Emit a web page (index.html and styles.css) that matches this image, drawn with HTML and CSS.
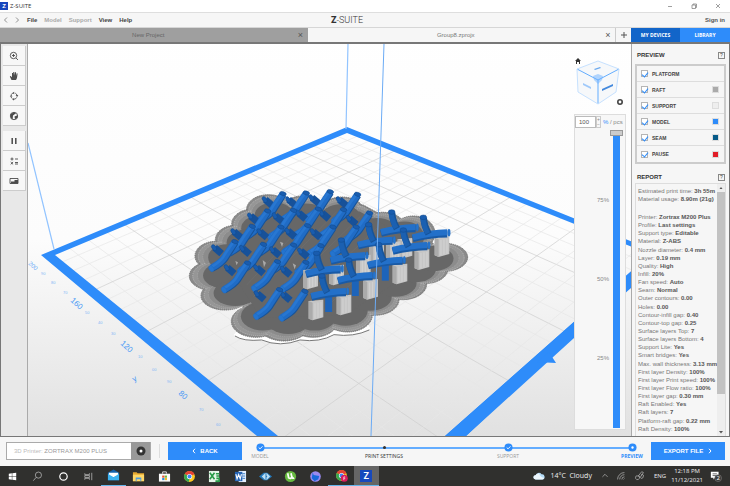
FILE: index.html
```html
<!DOCTYPE html>
<html lang="en">
<head>
<meta charset="utf-8">
<title>Z-SUITE</title>
<link rel="stylesheet" href="styles.css">
</head>
<body>
<header class="titlebar">
  <span class="app-badge">Z</span><span class="app-name">Z-SUITE</span>
  <div class="window-buttons">
    <button aria-label="Minimize"><svg viewBox="0 0 8 8"><path d="M2 4.500h4"/></svg></button>
    <button aria-label="Restore"><svg viewBox="0 0 8 8"><path d="M2 3h3.500v3.500h-3.500zM3 3V2h3.500v3.500h-1"/></svg></button>
    <button aria-label="Close"><svg viewBox="0 0 8 8"><path d="M2 2l4 4M6 2l-4 4"/></svg></button>
  </div>
</header>
<nav class="menubar">
  <div class="menu-items">
    <button class="nav-arrow" aria-label="Undo"><svg viewBox="0 0 5 8"><path d="M4 1.500L1.500 4 4 6.500"/></svg></button>
    <button class="nav-arrow" aria-label="Redo"><svg viewBox="0 0 5 8"><path d="M1 1.500L3.500 4 1 6.500"/></svg></button>
    <button>File</button><button class="dim">Model</button><button class="dim">Support</button><button>View</button><button>Help</button>
  </div>
  <div class="logo"><b>Z</b>-SUITE</div>
  <a class="signin" href="#">Sign in</a>
</nav>
<div class="tabs">
  <div class="tab inactive"><span>New Project</span><button aria-label="Close New Project">×</button></div>
  <div class="tab"><span>Group8.zprojx</span><button aria-label="Close Group8">×</button></div>
  <button class="add-tab" aria-label="New tab"><svg viewBox="0 0 8 8"><path d="M4 1v6M1 4h6"/></svg></button>
  <button class="devices">MY DEVICES</button>
  <button class="library">LIBRARY</button>
</div>
<main class="workspace">
  <aside class="tools">
    <button aria-label="Zoom"><svg viewBox="0 0 10 10"><circle cx="4.500" cy="4.500" r="3.200"/><path d="M7 7l2 2M3 4.500h3M4.500 3v3"/></svg></button>
    <button aria-label="Pan"><svg viewBox="0 0 10 10"><path class="fill" d="M2.500 9L.8 5.500l.8-.4L3 6.200V2h1v2.500L4.300 1h1l.2 3.400L6 1.200h1V5l.7-2.800.9.300L8 7 7 9z"/></svg></button>
    <button aria-label="Rotate"><svg viewBox="0 0 10 10"><path d="M2 5.500a3 3 0 001.500 2.200M5 8.200a3 3 0 002.700-1.800M8 4.500A3 3 0 006.300 2.200M4.800 1.900A3 3 0 002.200 3.700"/><path class="fill" d="M.8 5.500L2.200 3.700l1.300 1.800zM6.600 4.300l2.700-.2L8.200 6zM4.900 7l.1 2.400-1.700-1zM5.200.8v2.400L3.800 2z"/></svg></button>
    <button aria-label="View mode"><svg viewBox="0 0 10 10"><circle cx="5" cy="5" r="3.700"/><path class="fill" d="M1.300 3.200L5 1.300l2 1-3 2.200-.4 4L2 7zM5.500 5.500l3-1.200v2.500L6 8.300z"/></svg></button>
    <button class="group-start" aria-label="Pause"><svg viewBox="0 0 10 10"><path class="thick" d="M3.200 2v6M6.800 2v6"/></svg></button>
    <button aria-label="Adjust"><svg viewBox="0 0 10 10"><path d="M1.500 3h3M3 1.500v3M6 3h3M1.700 6l2.400 2.400M4.100 6L1.700 8.400M6 6.500h3M6 8h3"/></svg></button>
    <button aria-label="Dimensions"><svg viewBox="0 0 10 10"><path d="M1 2.500h8v5H1z"/><path class="fill" d="M2 5.500h3.500V4H9v3.500H2z"/></svg></button>
  </aside>
  <section class="viewport">
    <svg class="scene" viewBox="28 44 603 392" preserveAspectRatio="xMidYMid slice" role="img" aria-label="Build platform with sliced models">
      <defs>
        <linearGradient id="floor" x1="0" y1="0" x2="0" y2="1"><stop offset="0" stop-color="#fff"/><stop offset=".48" stop-color="#fcfcfc"/><stop offset="1" stop-color="#d8d8d8"/></linearGradient>
        <g id="stub"><path class="stub" d="M-6-7L15 11"/><ellipse class="cap" cx="-8" cy="-7" rx="6" ry="10" transform="rotate(-35 -8 -7)"/></g>
        <g id="elbow"><path class="pipe-dark" d="M-36 38Q-6 22 3 8T34-40"/><path class="pipe" d="M-37 36Q-8 19 1 5T32-42"/><path class="shine" d="M-36 32Q-8 14-1 1T29-42"/><ellipse class="cap" cx="33" cy="-43" rx="10" ry="6" transform="rotate(18 33 -43)"/><ellipse class="end" cx="-38" cy="38" rx="7" ry="10" transform="rotate(-30 -38 38)"/></g>
        <g id="short"><path class="bar-dark" d="M-52 12Q0-2 52-2"/><path class="bar" d="M-52 8Q0-6 52-7"/><path class="pipe-dark" d="M-4-2Q-18-28-19-50"/><path class="neck" d="M-7-4Q-20-28-21-50"/><ellipse class="cap" cx="-20" cy="-52" rx="10" ry="7"/><ellipse class="end" cx="57" cy="-6" rx="4" ry="11"/></g>
        <g id="tee"><path class="leg" d="M0 0v56"/><use href="#short"/></g>
        <g id="prop"><path fill="#c6c6c6" d="M-22-27L22-31V22L-10 31-22 26z"/><path fill="#ababab" d="M-22-27l12 5v53l-12-5z"/><path stroke="#dadada" fill="none" stroke-width="2" d="M-3-20V26M6-22V24M15-24V22"/></g>
        <g id="outline">
          <ellipse cx="265" cy="88" rx="65" ry="44"/><ellipse cx="215" cy="132" rx="60" ry="44"/><ellipse cx="166" cy="180" rx="60" ry="44"/><ellipse cx="108" cy="228" rx="63" ry="44"/><ellipse cx="95" cy="288" rx="67" ry="43"/><ellipse cx="135" cy="347" rx="72" ry="43"/><ellipse cx="228" cy="424" rx="74" ry="48"/><ellipse cx="312" cy="431" rx="78" ry="52"/><ellipse cx="400" cy="420" rx="75" ry="52"/><ellipse cx="503" cy="405" rx="74" ry="51"/><ellipse cx="583" cy="360" rx="74" ry="46"/><ellipse cx="668" cy="313" rx="72" ry="46"/><ellipse cx="734" cy="267" rx="70" ry="44"/><ellipse cx="794" cy="232" rx="69" ry="42"/><ellipse cx="700" cy="160" rx="65" ry="52"/><ellipse cx="610" cy="142" rx="65" ry="45"/><ellipse cx="486" cy="94" rx="66" ry="43"/><ellipse cx="370" cy="90" rx="66" ry="42"/>
          <path d="M100 240L240 65 550 75 760 190 690 300 500 420 220 430z"/>
        </g>
      </defs>
      <rect x="-100" y="0" width="900" height="500" fill="url(#floor)"/>
      <g id="grid"></g>
      <g class="frame">
        <path d="M41 255L347 127 660 253 640 272 466 436 445 436 638 265 632 247 347 133 55 255 278 436H257z"/>
        <path d="M445 436L574 322 632 271V287L574 338 466 436z"/><path d="M537 362L549 352 556 363z"/>
      </g>
      <path class="edge" d="M28 143L54 249M348 44L346 129"/>
      <g class="ruler">
        <text transform="translate(28 264) rotate(42)">200</text><text transform="translate(70 301) rotate(42)" class="big">160</text><text transform="translate(120 344) rotate(42)" class="big">120</text><text transform="translate(178 394) rotate(42)" class="big">80</text>
        <text transform="translate(134 382) rotate(-30)" class="big">y</text>
        <g class="small"><text x="41" y="275">90</text><text x="51" y="284">80</text><text x="63" y="294">70</text><text x="85" y="314">50</text><text x="98" y="324">40</text><text x="111" y="335">30</text><text x="138" y="358">10</text><text x="152" y="371">00</text><text x="167" y="383">90</text><text x="199" y="411">70</text><text x="216" y="426">60</text></g>
      </g>
      <g transform="translate(180 180) scale(.3333)">
        <path class="skirt-gap" d="M165 460Q190 480 245 474 300 496 360 474 420 482 462 458 520 466 568 440"/>
        <path class="skirt" d="M165 468Q190 485 245 480 300 503 360 480 420 488 462 464 520 472 568 450"/>
        <g class="rim"><use href="#outline"/></g>
        <g class="ring" transform="translate(11 7) scale(.975)"><use href="#outline"/></g>
        <g class="ring pale" transform="translate(26 16) scale(.94)"><use href="#outline"/></g>
        <g class="raft" transform="translate(44 27) scale(.9)"><use href="#outline"/></g>
        <path class="hatch" d="M170 290L350 95M200 315L405 95M220 350L470 95M245 400L540 110M310 410L590 145M410 410L640 190"/>
        <path d="M248 240l10 8-6 14zM300 185l10 4-4 12zM166 243l8 4-4 9zM338 250l10 6-4 12z" fill="#aaa"/>
        <use href="#stub" x="262" y="66"/><use href="#stub" x="332" y="66"/><use href="#stub" x="402" y="60"/><use href="#stub" x="484" y="66"/>
        <use href="#elbow" x="276" y="84"/><use href="#elbow" x="346" y="82"/><use href="#elbow" x="418" y="78"/><use href="#elbow" x="500" y="86"/>
        <use href="#stub" x="218" y="115"/><use href="#stub" x="292" y="114"/><use href="#stub" x="362" y="106"/><use href="#stub" x="432" y="106"/><use href="#stub" x="514" y="122"/>
        <use href="#elbow" x="230" y="136"/><use href="#elbow" x="308" y="134"/><use href="#elbow" x="382" y="130"/><use href="#elbow" x="458" y="132"/><use href="#elbow" x="536" y="142"/>
        <use href="#stub" x="168" y="162"/><use href="#stub" x="246" y="162"/><use href="#stub" x="330" y="160"/><use href="#stub" x="406" y="162"/>
        <use href="#elbow" x="184" y="182"/><use href="#elbow" x="270" y="184"/><use href="#elbow" x="350" y="180"/><use href="#elbow" x="426" y="184"/><use href="#elbow" x="496" y="184"/>
        <use href="#stub" x="110" y="210"/><use href="#stub" x="194" y="212"/><use href="#stub" x="284" y="216"/><use href="#stub" x="368" y="220"/>
        <use href="#elbow" x="132" y="228"/><use href="#elbow" x="218" y="236"/><use href="#elbow" x="308" y="238"/><use href="#elbow" x="390" y="240"/>
        <use href="#stub" x="148" y="270"/><use href="#stub" x="236" y="270"/><use href="#stub" x="316" y="274"/>
        <use href="#elbow" x="170" y="292"/><use href="#elbow" x="260" y="288"/><use href="#elbow" x="345" y="290"/>
        <use href="#stub" x="238" y="348"/><use href="#stub" x="316" y="350"/><use href="#elbow" x="266" y="372"/><use href="#elbow" x="342" y="377"/>
        <use href="#prop" x="786" y="200"/><use href="#prop" x="675" y="205"/><use href="#prop" x="590" y="215"/><use href="#short" x="655" y="148"/><use href="#short" x="750" y="164"/>
        <use href="#prop" x="726" y="239"/><use href="#prop" x="640" y="215"/><use href="#short" x="586" y="186"/><use href="#short" x="690" y="202"/>
        <use href="#prop" x="660" y="282"/><use href="#prop" x="550" y="255"/><use href="#prop" x="470" y="285"/><use href="#prop" x="392" y="297"/><use href="#short" x="504" y="232"/><use href="#tee" x="616" y="246"/>
        <use href="#prop" x="572" y="328"/><use href="#short" x="430" y="272"/><use href="#tee" x="526" y="292"/>
        <use href="#prop" x="408" y="390"/><use href="#prop" x="492" y="375"/><use href="#tee" x="446" y="340"/>
      </g>
      <path class="edge front" d="M384 44L371 436"/>
    </svg>
    <div class="orient">
      <svg viewBox="0 0 54 52" role="img" aria-label="Orientation cube"><path d="M2 6L5 3l3 3H7v3H6V7H4v2H3V6z" fill="#333"/><path d="M4 14l21-8 21 8-3 23-18 12L5 37z" fill="#f6f8fa"/><path d="M4 14l21 11 21-11M25 25v24" fill="none" stroke="#63adff"/><path d="M4 14l21-8 21 8-3 23-18 12L5 37z" fill="none" stroke="#c6e1ff"/><path d="M20 21l5-2 5 2-1 4-4 4-4-4z" fill="#6ab0ff" opacity=".5"/><path d="M21 14l6-2 1 1-6 2z" fill="#6aa8ee"/><path d="M10 28l8 4v2l-8-4z" fill="#9fc9fa"/><path d="M29 34l11-5v2l-11 5z" fill="#4389dd"/><circle cx="47" cy="47" r="2.200" fill="none" stroke="#444" stroke-width="1.600"/></svg>
    </div>
    <div class="layer-panel">
      <div class="layer-value"><input type="number" value="100" aria-label="Visible layers"><span class="spin"><i>+</i><i>−</i></span><span><em>%</em> / pcs</span></div>
      <div class="layer-body"><div class="marks"><span>75%</span><span>50%</span><span>25%</span></div><input class="layer-slider" type="range" min="0" max="100" value="100" aria-label="Layer position"></div>
    </div>
  </section>
  <aside class="side">
    <div class="side-head"><h2>PREVIEW</h2><button aria-label="Preview help">?</button></div>
    <div class="legend">
      <label><input type="checkbox" checked>PLATFORM</label>
      <label><input type="checkbox" checked>RAFT<i class="swatch raft-c"></i></label>
      <label><input type="checkbox" checked>SUPPORT<i class="swatch support-c"></i></label>
      <label><input type="checkbox" checked>MODEL<i class="swatch model-c"></i></label>
      <label><input type="checkbox" checked>SEAM<i class="swatch seam-c"></i></label>
      <label><input type="checkbox" checked>PAUSE<i class="swatch pause-c"></i></label>
    </div>
    <div class="side-head report-head"><h2>REPORT</h2><button aria-label="Report help">?</button></div>
    <div class="report">
      <div class="report-text">
        <p>Estimated print time: <b>3h 55m</b></p><p>Material usage: <b>8.90m (21g)</b></p>
        <div class="settings">
          <p>Printer: <b>Zortrax M200 Plus</b></p><p>Profile: <b>Last settings</b></p><p>Support type: <b>Editable</b></p><p>Material: <b>Z-ABS</b></p><p>Nozzle diameter: <b>0.4 mm</b></p><p>Layer: <b>0.19 mm</b></p><p>Quality: <b>High</b></p><p>Infill: <b>20%</b></p><p>Fan speed: <b>Auto</b></p><p>Seam: <b>Normal</b></p><p>Outer contours: <b>0.00</b></p><p>Holes: <b>0.00</b></p><p>Contour-infill gap: <b>0.40</b></p><p>Contour-top gap: <b>0.25</b></p><p>Surface layers Top: <b>7</b></p><p>Surface layers Bottom: <b>4</b></p><p>Support Lite: <b>Yes</b></p><p>Smart bridges: <b>Yes</b></p><p>Max. wall thickness: <b>3.13 mm</b></p><p>First layer Density: <b>100%</b></p><p>First layer Print speed: <b>100%</b></p><p>First layer Flow ratio: <b>100%</b></p><p>First layer gap: <b>0.30 mm</b></p><p>Raft Enabled: <b>Yes</b></p><p>Raft layers: <b>7</b></p><p>Platform-raft gap: <b>0.22 mm</b></p><p>Raft Density: <b>100%</b></p>
        </div>
      </div>
      <div class="scrollbar"><svg viewBox="0 0 8 8"><path d="M2.500 5L4 3l1.500 2z"/></svg><div class="thumb"></div><svg viewBox="0 0 8 8"><path d="M2 3h4L4 5.500z"/></svg></div>
    </div>
  </aside>
</main>
<footer class="actions">
  <div class="printer"><span>3D Printer: <b>ZORTRAX M200 PLUS</b></span><button aria-label="Printer settings"><svg viewBox="0 0 10 10"><circle cx="5" cy="5" r="4.500" fill="#333"/><circle cx="5" cy="5" r="1.500" fill="#fff"/></svg></button></div>
  <span class="divider"></span>
  <button class="primary"><svg viewBox="0 0 4 6"><path d="M3 .8L1 3l2 2.200"/></svg>BACK</button>
  <ol class="steps">
    <li><svg viewBox="0 0 10 10"><circle cx="5" cy="5" r="4.500" fill="#2e8cfa"/><path d="M3 5l1.500 1.500L7.200 3.700" stroke="#fff" fill="none"/></svg>MODEL</li>
    <li class="current"><svg viewBox="0 0 10 10"><circle cx="5" cy="5" r="1.700" fill="#333"/></svg>PRINT SETTINGS</li>
    <li><svg viewBox="0 0 10 10"><circle cx="5" cy="5" r="4.500" fill="#2e8cfa"/><path d="M3 5l1.500 1.500L7.200 3.700" stroke="#fff" fill="none"/></svg>SUPPORT</li>
    <li class="active"><svg viewBox="0 0 10 10"><circle cx="5" cy="5" r="4.500" fill="#2e8cfa"/><circle cx="5" cy="5" r="1.300" fill="#fff"/></svg>PREVIEW</li>
  </ol>
  <button class="primary export">EXPORT FILE<svg viewBox="0 0 4 6"><path d="M1 .8L3 3 1 5.200"/></svg></button>
</footer>
<footer class="taskbar">
  <div class="apps">
    <button aria-label="Start"><svg viewBox="0 0 14 14"><path fill="#fff" d="M3 4l3.300-.5v3.200H3zM6.800 3.400L11 3v3.700H6.800zM3 7.200h3.300v3.200L3 10zM6.800 7.200H11V11l-4.200-.5z"/></svg></button>
    <button aria-label="Search"><svg viewBox="0 0 14 14" class="line"><circle cx="8" cy="5.500" r="3.300"/><path d="M5.500 8L2.500 11.500"/></svg></button>
    <button aria-label="Cortana"><svg viewBox="0 0 14 14"><circle cx="7" cy="7" r="4" fill="none" stroke="#fff" stroke-width="1.300"/></svg></button>
    <button aria-label="Task view"><svg viewBox="0 0 14 14" class="line"><path d="M3 3.500V5h5V3.500M3 10.500V9h5v1.500M3 6h5v2H3zM10.500 3v8"/></svg></button>
    <button aria-label="Mail" class="running"><svg viewBox="0 0 14 14"><path fill="#1463ad" d="M1 4l6-3.500L13 4v8H1z"/><path fill="#fff" d="M2 4h10v3L7 9 2 7z"/><path fill="#3cb2f0" d="M1 5l6 4 6-4v7H1z"/></svg></button>
    <button aria-label="Files"><svg viewBox="0 0 14 14"><path fill="#e7a92f" d="M1 2.500h4l1 1h7V12H1z"/><path fill="#ffd868" d="M1 5h12v7H1z"/><path fill="#4d9be0" d="M4 8h6v4H9v-2H5v2H4z"/></svg></button>
    <button aria-label="Store"><svg viewBox="0 0 14 14"><path fill="none" stroke="#ddd" d="M5 4V2h4v2"/><path fill="#fafafa" d="M1 4h12v8.500H1z"/><path fill="#e45435" d="M4.500 6H7v2.300H4.500z"/><path fill="#6fb83e" d="M7.300 6h2.400v2.300H7.300z"/><path fill="#2b91df" d="M4.500 8.600H7v2.300H4.500z"/><path fill="#f4b826" d="M7.300 8.600h2.400v2.300H7.300z"/></svg></button>
    <button aria-label="Chrome"><svg viewBox="0 0 14 14"><use href="#chrome"/><defs><g id="chrome"><circle cx="7" cy="7" r="5.800" fill="#fbc923"/><path d="M7 7L1.800 4.300A5.800 5.800 0 0112.300 4.500z" fill="#e64335"/><path d="M7 7L1.800 4.300A5.800 5.800 0 006.500 12.800z" fill="#36a852"/><circle cx="7" cy="7" r="2.800" fill="#fff"/><circle cx="7" cy="7" r="2.100" fill="#4285f4"/></g></defs></svg></button>
    <button aria-label="Excel"><svg viewBox="0 0 14 14"><path fill="#e6f5e9" d="M1 1h11v12H1z"/><path stroke="#299b48" stroke-width="1.700" fill="none" d="M2 3l5 7M7 3l-5 7M8.500 4H12M9 6.500h3M9 9h3v3H8"/></svg></button>
    <button aria-label="Word"><svg viewBox="0 0 14 14"><path fill="#e5f0ff" d="M5 1h8v12H5z"/><path stroke="#347ac6" d="M9 4h3M9 6.500h3M9 9h3"/><path fill="#2564b5" d="M1 2h8v10H1z"/><path stroke="#fff" stroke-width="1.200" fill="none" d="M2 4.500l1.300 5L5 5l1.700 4.500L8 4.500"/></svg></button>
    <button aria-label="Scanner"><svg viewBox="0 0 14 14"><path fill="#2478ba" d="M0 7l5-4h4l5 4-5 4H5z"/><path fill="#bcdef4" d="M3 7l4-4v8zM8 3l4 4-4 4V8l1-1-1-1z"/></svg></button>
    <button aria-label="Torrent"><svg viewBox="0 0 14 14"><circle cx="7" cy="7" r="6" fill="#67b941"/><path stroke="#fff" stroke-width="1.800" fill="none" d="M4 3.500l1 5q2.500 1.500 3.500-1l-1-4M8.500 7.500q.5 2 2.500 1"/></svg></button>
    <button aria-label="Player"><svg viewBox="0 0 14 14"><circle cx="7" cy="7" r="5.700" fill="#9a8af1"/><path fill="#1969dc" d="M4 2.500l1 3L11 6.500 10 10 6 12 3 9z"/></svg></button>
    <button aria-label="Chrome profile" class="running"><svg viewBox="0 0 14 14"><use href="#chrome"/><circle cx="10" cy="10" r="3.800" fill="#d91b5c"/><path stroke="#fff" d="M9.500 12V8.500H11M9.500 10H11" fill="none" stroke-width=".7"/></svg></button>
    <button aria-label="Z-SUITE" class="running selected"><span>Z</span></button>
  </div>
  <div class="tray">
    <svg class="cloud" viewBox="0 0 14 14"><path fill="#b4dcf7" d="M3 11a2.500 2.500 0 010-5 4 4 0 017-1 3 3 0 011 6z"/><path fill="#edf7fe" d="M3 11a2.500 2.500 0 010-5 4 4 0 014-2q2 5 6 5-.5 2-2 2z"/></svg>
    <span class="weather">14°C&nbsp; Cloudy</span>
    <svg class="line caret" viewBox="0 0 14 14"><path d="M4 8l3-3 3 3"/></svg>
    <svg class="line wifi" viewBox="0 0 14 14"><path d="M3 11A8 8 0 0111 3M5.500 11A5.500 5.500 0 0111 5.500M8 11a3 3 0 013-3M10 11l1-1"/></svg>
    <svg class="line pen" viewBox="0 0 14 14"><path d="M2 10q-1-4 3-3t0 4q-2 1-3-1zM5 7l4-5 2 1-4 6zM8 10q3 0 3-3t-3-1"/></svg>
    <span class="lang">ENG</span>
    <span class="clock">12:18 PM<br>11/12/2021</span>
    <svg class="notice" viewBox="0 0 14 14"><path fill="#fff" d="M1 2h9v7H6l-2 2V9H1z"/><path stroke="#555" d="M3 4.500h5M3 6.500h4"/><circle cx="9.500" cy="9.500" r="4" fill="#3b3b39" stroke="#888" stroke-width=".6"/><text x="9.500" y="12" text-anchor="middle">2</text></svg>
  </div>
</footer>
<script src="grid.js"></script>
</body>
</html>
```
FILE: styles.css
```css
* { box-sizing: border-box; }
body { margin: 0; height: 100vh; display: flex; flex-direction: column; overflow: hidden; background: #f6f6f6; color: #444; font: 6px/8px "Liberation Sans", Arial, sans-serif; }
button { border: 0; padding: 0; background: none; color: inherit; font: inherit; display: flex; align-items: center; justify-content: center; }
svg { display: block; }
p, h2 { margin: 0; }
.titlebar { height: 12px; flex: none; display: flex; align-items: center; background: #fff; }
.app-badge { width: 8px; height: 8px; margin-right: 2px; background: #1746bd; color: #fff; font-weight: bold; text-align: center; }
.app-name { font-family: "Open Sans", sans-serif; color: #333; }
.window-buttons { margin-left: auto; display: flex; gap: 16px; padding-right: 8px; }
.window-buttons svg { width: 8px; height: 8px; fill: none; stroke: #777; stroke-width: .7; }
.menubar { height: 16px; flex: none; display: grid; grid-template-columns: 1fr auto 1fr; align-items: center; border-top: 1px solid #dedede; border-bottom: 1px solid #d6d6d6; padding: 0 5px 0 3px; font-weight: bold; }
.menu-items { display: flex; gap: 7px; }
.menu-items .nav-arrow { width: 5px; }
.nav-arrow svg { width: 5px; height: 8px; fill: none; stroke: #777; stroke-width: .8; }
.dim { color: #aaa; }
.logo { font: 300 9px/12px Roboto, sans-serif; color: #333; padding-right: 34px; }
.logo b { font-weight: 900; }
.signin { justify-self: end; color: #555; text-decoration: none; }
.tabs { height: 16px; flex: none; display: flex; border-bottom: 2px solid #777; }
.tab { flex: 1; display: flex; align-items: center; padding-right: 3px; background: #f6f6f6; color: #777; }
.tab span { flex: 1; text-align: center; }
.tab button { width: 8px; font-size: 9px; color: #555; }
.inactive { background: #9f9f9f; color: #666; }
.add-tab { width: 16px; border-left: 1px solid #ccc; }
.add-tab svg { width: 8px; height: 8px; stroke: #555; stroke-width: 1; }
.devices, .library { width: 49px; color: #fff; font: bold 5px/8px "Open Sans", sans-serif; background: #1265c9; }
.library { width: 50px; background: #2e8cfa; }
.workspace { flex: 1; min-height: 0; display: flex; border: 0 solid #777; border-width: 0 1px 1px; }
.tools { width: 27px; flex: none; background: #e8e8e8; border-right: 1px solid #aaa; padding: 2px 1px 2px 2px; display: flex; flex-direction: column; }
.tools button { height: 20px; flex: none; background: #f7f7f7; border-bottom: 1px solid #ccc; border-right: 1px solid #ccc; }
.tools .group-start { margin-top: 5px; }
.tools svg { width: 10px; height: 10px; fill: none; stroke: #4b4b4b; stroke-width: .9; }
.tools .fill { fill: #4b4b4b; stroke: none; }
.tools .thick { stroke-width: 1.5; }
.viewport { flex: 1; min-width: 0; position: relative; overflow: hidden; }
.scene { width: 100%; height: 100%; }
#grid path { fill: none; stroke: #e6e6e6; stroke-width: .7; }
#grid .major { stroke: #cfcfcf; }
.frame { fill: #2e8cfa; }
.edge { fill: none; stroke: #92c4ff; stroke-width: 1.2; }
.front { stroke: #6babf5; stroke-width: 1; }
.ruler { fill: #68aaf7; font-size: 6px; }
.ruler .big { font-size: 8px; fill: #4a99f5; }
.ruler .small { font-size: 4px; fill: #82b8f5; }
.skirt { fill: none; stroke: #777; stroke-width: 3; }
.skirt-gap { fill: none; stroke: #fff; stroke-width: 12; }
.rim { fill: #8a8a8a; stroke: #6f6f6f; stroke-width: 3; stroke-dasharray: 4 2; }
.ring { fill: #969696; stroke: #b9b9b9; stroke-width: 3; stroke-dasharray: 3 3; }
.pale { fill: #8c8c8c; stroke: #a6a6a6; }
.raft { fill: #676767; }
.hatch { stroke: #777; stroke-width: 2; opacity: .5; }
.stub { fill: none; stroke: #175199; stroke-width: 21; }
.cap { fill: #195cae; stroke: #134a8d; stroke-width: 1.5; }
.end { fill: #2474ce; stroke: #1e67bd; stroke-width: 1; }
.pipe, .neck { fill: none; stroke: #206cc6; stroke-width: 20; }
.neck { stroke-width: 15; stroke: #1b60b1; }
.pipe-dark { fill: none; stroke: #185499; stroke-width: 20; }
.shine { fill: none; stroke: #2877d1; stroke-width: 8; }
.bar-dark { fill: none; stroke: #195aa6; stroke-width: 21; }
.bar { fill: none; stroke: #2370c9; stroke-width: 18; }
.leg { stroke: #1d64ba; stroke-width: 21; }
.orient { position: absolute; top: 11px; right: 4px; width: 54px; }
.orient svg { width: 100%; }
.layer-panel { position: absolute; top: 70px; right: 5px; bottom: 6px; width: 52px; display: flex; flex-direction: column; background: #f7f7f7; border: 1px solid #ddd; color: #888; }
.layer-value { display: flex; align-items: center; height: 14px; }
.layer-value input { width: 21px; height: 12px; border: 1px solid #bbb; padding: 0 3px; font: inherit; color: #555; background: #fff; appearance: textfield; }
.layer-value input::-webkit-inner-spin-button { display: none; }
.spin { width: 5px; height: 12px; margin-right: 2px; border: 1px solid #ccc; font-size: 5px; line-height: 5px; }
.spin i { display: block; font-style: normal; text-align: center; }
.layer-value em { color: #2e8cfa; font-style: normal; }
.layer-body { flex: 1; min-height: 0; display: flex; justify-content: flex-end; padding: 1px 2px 1px 0; }
.marks { display: flex; flex-direction: column; justify-content: space-between; padding: 66px 1px 66px 0; }
.layer-slider { appearance: none; writing-mode: vertical-lr; direction: rtl; width: 13px; height: 100%; margin: 0; background: linear-gradient(90deg, transparent 3px, #2e8cfa 3px, #2e8cfa 10px, transparent 10px); }
.layer-slider::-webkit-slider-thumb { appearance: none; width: 13px; height: 6px; border: 1px solid #999; background: #ccc; }
.side { width: 98px; flex: none; display: flex; flex-direction: column; background: #f6f6f6; border-left: 1px solid #aaa; padding: 6px 3px 0 3px; }
.side-head { display: flex; justify-content: space-between; align-items: center; height: 10px; flex: none; padding: 0 1px 0 2px; }
.side-head h2 { font-size: 6px; line-height: 8px; color: #333; }
.side-head button { width: 7px; height: 7px; border: 1px solid #888; font-size: 5px; }
.legend { flex: none; margin-top: 4px; border: 2px solid #ccc; }
.legend label { height: 16px; display: flex; align-items: center; padding: 0 5px 0 4px; border-bottom: 1px solid #ddd; font-size: 5px; font-weight: bold; color: #444; }
.legend label:last-child { border: 0; }
.legend input { appearance: none; width: 7px; height: 7px; margin: 0 4px 0 0; border: 1px solid #b5b5b5; background: #fff; display: flex; align-items: center; justify-content: center; }
.legend input:checked::before { content: ""; width: 3px; height: 5px; border: solid #2e8cfa; border-width: 0 1px 1px 0; transform: rotate(40deg); }
.swatch { width: 7px; height: 7px; margin-left: auto; border: 1px solid #ddd; }
.raft-c { background: #aaa; } .support-c { background: #eee; } .model-c { background: #2e8cfa; } .seam-c { background: #075b89; } .pause-c { background: #e11d28; }
.report-head { margin-top: 8px; }
.report { flex: 1; min-height: 0; display: flex; margin-top: 1px; border: 1px solid #ddd; border-bottom: 0; }
.report-text { flex: 1; min-width: 0; padding: 3px 0 3px 2px; display: flex; flex-direction: column; color: #777; white-space: nowrap; }
.report-text b { color: #555; }
.settings { flex: 1; min-height: 0; margin-top: 10px; display: flex; flex-direction: column; justify-content: space-between; }
.scrollbar { width: 8px; flex: none; display: flex; flex-direction: column; background: #eee; }
.scrollbar svg { width: 8px; height: 8px; fill: #555; }
.thumb { height: 80%; margin-bottom: auto; background: #c2c2c2; }
.actions { height: 29px; flex: none; display: flex; align-items: flex-start; padding: 5px 5px 0 6px; }
.printer { width: 145px; height: 18px; display: flex; align-items: center; justify-content: space-between; border: 1px solid #aaa; background: #fff; color: #bbb; padding-left: 7px; }
.printer b { font-weight: normal; color: #999; }
.printer button { width: 19px; height: 18px; background: #999; }
.printer svg { width: 10px; height: 10px; }
.divider { width: 1px; height: 14px; margin: 2px 8px; background: #ddd; }
.primary { width: 74px; height: 18px; gap: 4px; background: #2e8cfa; color: #fff; font-weight: bold; }
.primary svg { width: 4px; height: 6px; fill: none; stroke: #fff; }
.export { gap: 5px; }
.steps { flex: 1; display: flex; justify-content: space-between; list-style: none; margin: 1px 14px 0 13px; padding: 0; background: linear-gradient(#64adff, #64adff) 5px 4px / calc(100% - 10px) 2px no-repeat; color: #999; }
.steps li { width: 10px; display: flex; flex-direction: column; align-items: center; gap: 1px; font: 5px/7px "Open Sans", sans-serif; white-space: nowrap; }
.steps svg { width: 9px; height: 9px; flex: none; }
.steps .current { color: #333; }
.steps .active { color: #2e8cfa; font-weight: bold; }
.taskbar { height: 20px; flex: none; display: flex; align-items: center; background: #30302e; color: #eee; font-family: "Open Sans", sans-serif; }
.apps { width: 379px; height: 100%; display: grid; grid-template-columns: repeat(15, 1fr); }
.apps svg { width: 13px; height: 13px; }
.line { fill: none; stroke: #bbb; stroke-width: .8; }
.running { border-bottom: 1px solid #65b6ec; }
.selected { background: #656565; }
.selected span { width: 12px; height: 12px; background: #1749bd; color: #fff; font: bold 9px/12px Roboto, sans-serif; }
.tray { margin-left: auto; display: flex; align-items: center; padding-right: 8px; }
.tray svg { width: 12px; height: 12px; }
.weather { font-size: 7px; margin-left: 5px; white-space: nowrap; }
.tray .caret { margin-left: 7px; }
.tray .wifi { margin-left: 4px; }
.tray .pen { margin-left: 7px; }
.lang { margin-left: 8px; }
.clock { margin: 0 7px 0 5px; text-align: center; line-height: 9px; }
.notice text { font-size: 7px; fill: #fff; }
```
FILE: grid.js
```js
// Projects the build plate's grid onto the quad formed by its four corners.
const [L, T, R, B] = [[48, 255], [347, 131], [660, 256], [365, 515]];
const dx1 = T[0] - R[0], dx2 = B[0] - R[0], dx3 = L[0] - T[0] + R[0] - B[0];
const dy1 = T[1] - R[1], dy2 = B[1] - R[1], dy3 = L[1] - T[1] + R[1] - B[1];
const det = dx1 * dy2 - dx2 * dy1;
const g = (dx3 * dy2 - dx2 * dy3) / det;
const h = (dx1 * dy3 - dx3 * dy1) / det;
function project(u, v) {
  const w = g * u + h * v + 1;
  return [0, 1].map(i => ((T[i] - L[i] + g * T[i]) * u + (B[i] - L[i] + h * B[i]) * v + L[i]) / w).join(" ");
}
const grid = document.getElementById("grid");
function line(a, b, major) {
  const p = document.createElementNS("http://www.w3.org/2000/svg", "path");
  p.setAttribute("d", `M${a}L${b}`);
  if (major) p.setAttribute("class", "major");
  grid.append(p);
}
for (let i = 1; i < 20; i++) {
  const t = i / 20;
  line(project(t, 0), project(t, 1), i % 4 === 0);
  line(project(0, t), project(1, t), i % 4 === 0);
}
```
